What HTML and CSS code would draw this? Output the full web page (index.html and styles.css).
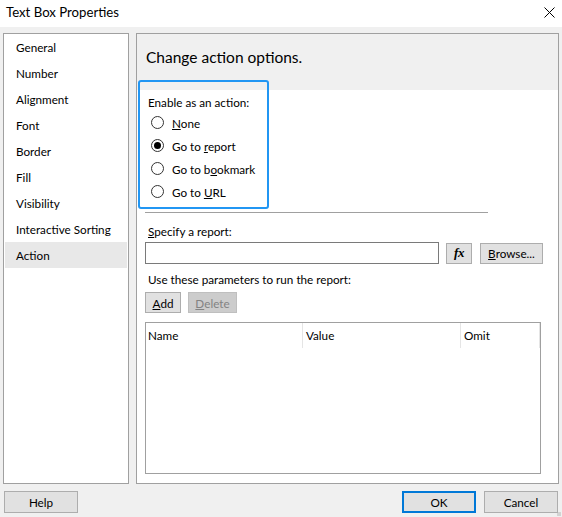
FILE: index.html
```html
<!DOCTYPE html>
<html>
<head>
<meta charset="utf-8">
<link rel="stylesheet" href="styles.css">
</head>
<body>
<div class="dialog">
  <div class="titlebar">
    <span class="title">Text Box Properties</span>
    <span class="close" aria-label="Close">
      <svg width="11" height="11" viewBox="0 0 11 11"><path d="M0.5 0.5L10.5 10.5M10.5 0.5L0.5 10.5" stroke="#000" stroke-width="1"/></svg>
    </span>
  </div>
  <div class="main">
    <div class="nav">
      <div class="nav-item">General</div>
      <div class="nav-item">Number</div>
      <div class="nav-item">Alignment</div>
      <div class="nav-item">Font</div>
      <div class="nav-item">Border</div>
      <div class="nav-item">Fill</div>
      <div class="nav-item">Visibility</div>
      <div class="nav-item">Interactive Sorting</div>
      <div class="nav-item selected">Action</div>
    </div>
    <div class="page">
      <div class="page-header">Change action options.</div>
      <div class="content">
        <div class="label">Enable as an action:</div>
        <div class="radio-row"><span class="radio"></span><span><u>N</u>one</span></div>
        <div class="radio-row"><span class="radio checked"></span><span>Go to <u>r</u>eport</span></div>
        <div class="radio-row"><span class="radio"></span><span>Go to b<u>o</u>okmark</span></div>
        <div class="radio-row"><span class="radio"></span><span>Go to <u>U</u>RL</span></div>
        <div class="separator"></div>
        <div class="label label-spec"><u>S</u>pecify a report:</div>
        <div class="input-row">
          <div class="textbox"></div>
          <div class="btn btn-fx"><span class="fx">fx</span></div>
          <div class="btn btn-browse"><u>B</u>rowse...</div>
        </div>
        <div class="label label-use">Use these parameters to run the report:</div>
        <div class="btn-row">
          <div class="btn btn-add"><u>A</u>dd</div>
          <div class="btn btn-delete disabled"><u>D</u>elete</div>
        </div>
        <div class="grid">
          <div class="grid-head">
            <div class="col col-name">Name</div>
            <div class="col col-value">Value</div>
            <div class="col col-omit">Omit</div>
          </div>
        </div>
      </div>
      <div class="highlight"></div>
    </div>
  </div>
  <div class="footer">
    <div class="btn btn-foot">Help</div>
    <div class="spacer"></div>
    <div class="btn btn-foot btn-default">OK</div>
    <div class="btn btn-foot">Cancel</div>
  </div>
  <div class="grip"></div>
</div>
</body>
</html>
```

FILE: styles.css
```css
* { box-sizing: border-box; }
html, body { margin: 0; padding: 0; }
body {
  width: 562px;
  height: 517px;
  overflow: hidden;
  background: #f0f0f0;
  font-family: "Lato", "Noto Sans", sans-serif;
  font-size: 11.7px;
  color: #000;
}
.dialog { position: relative; width: 562px; height: 517px; }
.titlebar {
  height: 27px;
  background: #fff;
  display: flex;
  align-items: center;
  padding-left: 6px;
  padding-right: 6px;
}
.title { font-size: 13.2px; flex: 1; padding-bottom: 3px; }
.close { width: 11px; height: 11px; display: flex; margin-right: 1px; margin-bottom: 3px; }
.main {
  display: flex;
  gap: 7px;
  padding: 6px 3px 0 3px;
  height: 457px;
}
.nav {
  flex: 0 0 126px;
  width: 126px;
  height: 451px;
  background: #fff;
  border: 1px solid #a0a0a0;
  padding: 0 1px;
}
.nav-item {
  height: 26px;
  line-height: 26px;
  padding-left: 11px;
}
.nav-item.selected { background: #e8e8e8; }
.page {
  position: relative;
  flex: 1 1 0;
  min-width: 0;
  height: 451px;
  background: #fff;
  border: 1px solid #a0a0a0;
}
.page-header {
  height: 56px;
  background: #f0f0f0;
  font-size: 15.5px;
  line-height: 47px;
  padding-left: 9px;
}
.content { padding: 0 17px 0 8px; }
.label { height: 18px; line-height: 18px; padding-left: 3px; }
.content > .label:first-child { margin-top: 3px; }
.radio-row {
  height: 23px;
  display: flex;
  align-items: center;
  gap: 8px;
  padding-left: 6px;
}
.radio {
  width: 13px;
  height: 13px;
  border: 1px solid #333;
  border-radius: 50%;
  display: flex;
  align-items: center;
  justify-content: center;
  background: #fff;
}
.radio.checked::after {
  content: "";
  width: 7px;
  height: 7px;
  border-radius: 50%;
  background: #000;
}
.separator {
  margin-top: 9px;
  width: 343px;
  height: 1px;
  background: #a0a0a0;
}
.label-spec { margin-top: 9px; }
.input-row { display: flex; align-items: center; margin-top: 2px; height: 22px; }
.textbox {
  flex: 0 0 294px;
  height: 22px;
  border: 1px solid #7a7a7a;
  background: #fff;
}
.btn {
  height: 21px;
  border: 1px solid #adadad;
  background: #e1e1e1;
  display: flex;
  align-items: center;
  justify-content: center;
  flex-shrink: 0;
}
.btn-fx { width: 26px; margin-left: 7px; }
.fx {
  font-family: "Liberation Serif", serif;
  font-weight: bold;
  font-style: italic;
  font-size: 13px;
  letter-spacing: -0.5px;
}
.btn-browse { width: 63px; margin-left: 8px; }
.label-use { margin-top: 6px; }
.btn-row { display: flex; gap: 7px; margin-top: 4px; }
.btn-add { width: 36px; }
.btn-delete { width: 49px; }
.btn.disabled { background: #cccccc; border-color: #bfbfbf; color: #838383; }
.grid {
  margin-top: 9px;
  width: 396px;
  height: 152px;
  border: 1px solid #a0a0a0;
  background: #fff;
}
.grid-head { display: flex; height: 25px; }
.col { line-height: 24px; padding-left: 2px; }
.col-name { width: 157px; border-right: 1px solid #e5e5e5; }
.col-value { width: 158px; border-right: 1px solid #e5e5e5; padding-left: 3px; }
.col-omit { flex: 1; padding-left: 3px; border-right: 1px solid #e5e5e5; }
.highlight {
  position: absolute;
  left: 1px;
  top: 46px;
  width: 131px;
  height: 129px;
  border: 2px solid #2196f3;
  border-radius: 3px;
  pointer-events: none;
}
.footer {
  display: flex;
  padding: 7px 4px 0 4px;
  gap: 8px;
}
.spacer { flex: 1; }
.btn-foot { width: 74px; height: 22px; }
.btn-default { border: 2px solid #0078d7; }
.grip {
  position: absolute;
  right: 1px;
  bottom: 1px;
  width: 4px;
  height: 4px;
  background: radial-gradient(circle, #b0b0b0 0.6px, transparent 0.8px) 0 0 / 2px 2px;
}
```
